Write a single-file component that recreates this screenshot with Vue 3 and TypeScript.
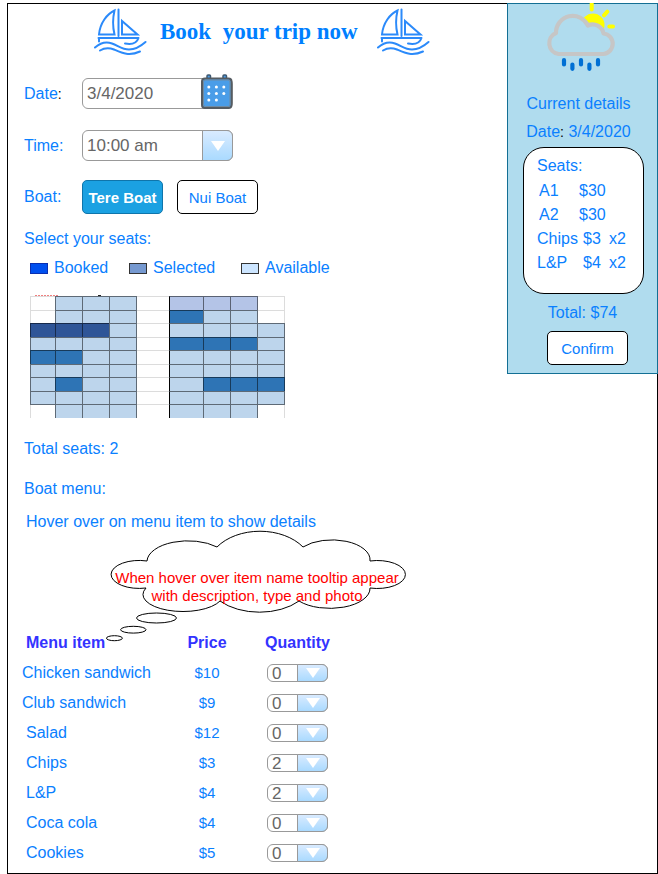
<script setup lang="ts">
import { computed, ref } from 'vue'

interface MenuItem {
  name: string
  price: number
  quantity: number
  sandwich?: boolean
}

const date = ref('3/4/2020')
const time = ref('10:00 am')
const boat = ref('Tere Boat')
const boats = ['Tere Boat', 'Nui Boat']
const times = ['10:00 am', '12:00 pm', '2:00 pm']
const quantities = [0, 1, 2, 3, 4]

const legend = [
  { label: 'Booked', kind: 'booked' },
  { label: 'Selected', kind: 'selected' },
  { label: 'Available', kind: 'available' },
]

// a: available, s: selected, b: booked, l: reserved, dot: no seat
const seatPlan = [
  '.aaa.lll.',
  '.aaa.saa.',
  'bbba.aaaa',
  'aaaa.sssa',
  'ssaa.aaaa',
  'aaaa.aaaa',
  'asaa.asss',
  'aaaa.aaaa',
  '.aaa.aaa.',
]
const seats = seatPlan.flatMap((row, r) =>
  [...row].map((kind, c) => ({ kind, id: `${r}-${c}`, divider: c === 5, name: `Row ${r + 1} seat ${c + 1}` })),
)

const pickedSeats = [
  { id: 'A1', price: 30 },
  { id: 'A2', price: 30 },
]

const menu = ref<MenuItem[]>([
  { name: 'Chicken sandwich', price: 10, quantity: 0, sandwich: true },
  { name: 'Club sandwich', price: 9, quantity: 0, sandwich: true },
  { name: 'Salad', price: 12, quantity: 0 },
  { name: 'Chips', price: 3, quantity: 2 },
  { name: 'L&P', price: 4, quantity: 2 },
  { name: 'Coca cola', price: 4, quantity: 0 },
  { name: 'Cookies', price: 5, quantity: 0 },
])

const ordered = computed(() => menu.value.filter((m) => m.quantity > 0))
const total = computed(
  () =>
    pickedSeats.reduce((sum, s) => sum + s.price, 0) +
    ordered.value.reduce((sum, m) => sum + m.price * m.quantity, 0),
)
</script>

<template>
  <div class="page">
    <div class="frame">
      <main class="main">
        <header class="header">
          <svg class="sailboat" viewBox="0 0 53 49" aria-hidden="true">
            <g id="sailboat">
              <path d="M20.5 3.5C13 7 6 16 5 27.5H20.5C18.5 19 18.5 12 20.5 3.5ZM24.5 2.5V29M28 14V27.5H43.5Z" />
              <path d="M4.5 31H44.5M5 31V34.5M44.5 31C43 35.5 39 38 31 36.5" />
              <path d="M1 40.5C5 37 11 34 18 36.5C24 38.5 28 42.5 35 42.5C42 42.5 47 39 51.5 35" />
              <path d="M6 43.5C10 41 15 40.5 20 42.5C28 46 35 49.5 46 44.5" />
            </g>
          </svg>
          <h1 class="title">Book&nbsp; your trip now</h1>
          <svg class="sailboat" viewBox="0 0 53 49" aria-hidden="true"><use href="#sailboat" /></svg>
        </header>

        <form class="form" @submit.prevent>
          <div class="row">
            <label for="date">Date<span class="colon">:</span></label>
            <div class="field">
              <input id="date" v-model="date" type="text" />
              <button type="button" class="calendar" aria-label="Open calendar">
                <svg viewBox="0 0 33 36" width="33" height="36">
                  <g fill="#4a9de8" stroke="#3f5870" stroke-width="1.5">
                    <rect x="7" y="2" width="3.5" height="6" rx="1" />
                    <rect x="23" y="2" width="3.5" height="6" rx="1" />
                  </g>
                  <rect x="2" y="5.5" width="29.5" height="29.5" rx="3" fill="#4a9de8" stroke="#555c62" stroke-width="2" />
                  <rect x="3.5" y="7" width="26.5" height="26.5" rx="2" fill="none" stroke="#6f8ba3" />
                  <g fill="#fff">
                    <circle cx="8.8" cy="14" r="1.5" /><circle cx="16.4" cy="14" r="1.5" /><circle cx="23.8" cy="14" r="1.5" />
                    <circle cx="8.8" cy="20.5" r="1.5" /><circle cx="16.4" cy="20.5" r="1.5" /><circle cx="23.8" cy="20.5" r="1.5" />
                    <circle cx="8.8" cy="27" r="1.5" /><circle cx="16.4" cy="27" r="1.5" />
                  </g>
                </svg>
              </button>
            </div>
          </div>
          <div class="row">
            <label for="time">Time:</label>
            <div class="field">
              <select id="time" v-model="time">
                <option v-for="t in times" :key="t">{{ t }}</option>
              </select>
              <span class="arrow"><svg viewBox="0 0 14 10" width="14" height="10"><path d="M0 0H14L7 10Z" /></svg></span>
            </div>
          </div>
          <div class="row boats">
            <span class="label">Boat:</span>
            <div class="choices">
              <button
                v-for="b in boats"
                :key="b"
                type="button"
                class="button"
                :class="{ active: b === boat }"
                @click="boat = b"
              >{{ b }}</button>
            </div>
          </div>
        </form>

        <p class="seats-heading">Select your seats:</p>
        <ul class="legend">
          <li v-for="l in legend" :key="l.kind"><i class="swatch" :class="l.kind"></i>{{ l.label }}</li>
        </ul>

        <div class="map">
          <svg class="map-edge" viewBox="0 0 254 1" width="254" height="1" aria-hidden="true">
            <path d="M5 .5H28" stroke="#f08080" stroke-dasharray="2 1" />
            <path d="M68 .5H71" stroke="#222" />
          </svg>
          <div class="seat-grid">
            <template v-for="s in seats" :key="s.id">
              <span v-if="s.kind === '.'" class="gap"></span>
              <button v-else type="button" class="seat" :class="[s.kind, { divider: s.divider }]" :aria-label="s.name"></button>
            </template>
          </div>
        </div>

        <p class="total-seats">Total seats: {{ pickedSeats.length }}</p>
        <h2 class="menu-heading">Boat menu:</h2>

        <section class="menu">
          <p class="hint">Hover over on menu item to show details</p>
          <div class="bubble" role="tooltip">
            <svg viewBox="0 0 302 112" width="302" height="112" aria-hidden="true">
              <path
                d="M41 31A41 21 0 0 1 111 17A52 36 0 0 1 197 17A38 20 0 0 1 264 31A28 14 0 1 1 264 58A40 20 0 0 1 193 71A52 32 0 0 1 114 71A40 17 0 0 1 40 58A28 14 0 1 1 41 31Z"
              />
              <ellipse cx="50.5" cy="88" rx="20" ry="5" />
              <ellipse cx="27.3" cy="99.7" rx="12.7" ry="3.4" />
              <ellipse cx="8.4" cy="108.2" rx="8" ry="2.5" />
            </svg>
            <p>When hover over item name tooltip appear with description, type and photo</p>
          </div>
          <table>
            <thead>
              <tr>
                <th class="name">Menu item</th>
                <th class="price">Price</th>
                <th class="quantity">Quantity</th>
              </tr>
            </thead>
            <tbody>
              <tr v-for="m in menu" :key="m.name">
                <td class="name" :class="{ sandwich: m.sandwich }">{{ m.name }}</td>
                <td class="price">${{ m.price }}</td>
                <td class="quantity">
                  <div class="field small">
                    <select v-model="m.quantity" :aria-label="`Quantity of ${m.name}`">
                      <option v-for="q in quantities" :key="q" :value="q">{{ q }}</option>
                    </select>
                    <span class="arrow"><svg viewBox="0 0 14 10" width="14" height="10"><path d="M0 0H14L7 10Z" /></svg></span>
                  </div>
                </td>
              </tr>
            </tbody>
          </table>
        </section>
      </main>

      <aside class="summary">
        <svg class="weather" viewBox="0 0 70 70" width="70" height="70" aria-hidden="true">
          <g stroke="#ffff00" stroke-width="4" stroke-linecap="round">
            <path d="M45.7 0V6.5M58 12.3L61.3 8.7M63.3 23.4H67" />
          </g>
          <circle cx="47" cy="22" r="11.5" fill="#ffff00" />
          <path
            d="M12.5 51A11 11 0 0 1 10 30A16.800 16.800 0 0 1 42 22.500A11 11 0 0 1 57.500 30.500A10.300 10.300 0 0 1 57.300 51Z"
            fill="#b0dcee"
            stroke="#c6c6c6"
            stroke-width="4.2"
            stroke-linejoin="round"
          />
          <path
            d="M18 57.2V61.5M26.4 61.5V65.8M35 57.2V61.5M43.4 61.5V65.8M52 57.2V61.5"
            stroke="#0070d4"
            stroke-width="4.2"
            stroke-linecap="round"
          />
        </svg>
        <h2>Current details</h2>
        <p class="summary-date">Date<span class="colon">:</span> {{ date }}</p>
        <div class="card">
          <h3>Seats:</h3>
          <ul class="lines seat-lines">
            <li v-for="s in pickedSeats" :key="s.id"><span>{{ s.id }}</span><span>${{ s.price }}</span></li>
          </ul>
          <ul class="lines item-lines">
            <li v-for="m in ordered" :key="m.name">
              <span>{{ m.name }}</span><span>${{ m.price }}</span><span>x{{ m.quantity }}</span>
            </li>
          </ul>
        </div>
        <p class="sum">Total: ${{ total }}</p>
        <button type="button" class="button">Confirm</button>
      </aside>
    </div>
  </div>
</template>

<style>
body {
  background: #fff;
}
</style>

<style scoped>
* {
  box-sizing: border-box;
}
.page {
  padding: 3px 0 0 7px;
  font: 16px/20px 'Liberation Sans', Arial, sans-serif;
  color: #0a80ff;
}
h1, h2, h3, p, ul {
  margin: 0;
  padding: 0;
  font-size: inherit;
  font-weight: normal;
  list-style: none;
}
button, select, input {
  font-family: inherit;
  margin: 0;
}
.frame {
  display: flex;
  align-items: flex-start;
  min-height: calc(100vh - 3px);
  border: 1px solid #000;
}
.main {
  flex: 1;
  min-width: 0;
  padding-left: 16px;
}
.header {
  display: flex;
  align-items: center;
  gap: 13px;
  height: 54px;
  margin-bottom: 20px;
  padding-left: 70px;
}
.sailboat {
  flex: none;
  width: 53px;
  height: 49px;
  fill: none;
  stroke: #2b8afa;
  stroke-width: 2;
  stroke-linecap: round;
}
.title {
  min-width: 204px;
  padding-top: 2px;
  font: bold 23px/28px 'Liberation Serif', 'Times New Roman', serif;
  color: #007fff;
  white-space: nowrap;
}
.row {
  display: grid;
  grid-template-columns: 58px auto;
  justify-content: start;
  align-items: center;
}
.row + .row {
  margin-top: 21px;
}
.row + .row.boats {
  margin-top: 19px;
}
.colon {
  color: #000;
  font-size: 14px;
}
.field {
  display: grid;
  grid-template: 31px / 151px;
}
.field > * {
  grid-area: 1 / 1;
}
.field input,
.field select {
  width: 100%;
  height: 100%;
  padding: 0 4px;
  border: 1px solid #999;
  border-radius: 6px;
  background: #fff;
  color: #666;
  font-size: 17px;
  line-height: 17px;
  appearance: none;
}
.calendar {
  justify-self: end;
  align-self: end;
  padding: 0;
  border: 0;
  background: none;
}
.calendar svg {
  display: block;
}
.arrow {
  display: flex;
  align-items: center;
  justify-content: center;
  justify-self: end;
  width: 31px;
  border: 1px solid #999;
  border-radius: 0 6px 6px 0;
  background: linear-gradient(#d9ebff, #aadaff);
  pointer-events: none;
}
.arrow path {
  fill: #fff;
}
.field.small {
  display: inline-grid;
  grid-template: 18px / 61px;
  vertical-align: middle;
}
.choices {
  display: flex;
  gap: 14px;
}
.button {
  width: 81px;
  height: 34px;
  padding: 1px 0 0;
  border: 1px solid #000;
  border-radius: 5px;
  background: #fff;
  color: #0a80ff;
  font-size: 15px;
  white-space: nowrap;
}
.button.active {
  border-color: #0f75ab;
  background: #1ba1e2;
  color: #fff;
  font-weight: bold;
}
.seats-heading {
  margin-top: 15px;
}
.legend {
  display: grid;
  grid-template-columns: 99px 112px auto;
  justify-content: start;
  margin: 9px 0 0 6px;
}
.legend li {
  display: flex;
  align-items: center;
  gap: 6px;
}
.swatch {
  width: 18px;
  height: 11px;
  border: 1px solid #333;
}
.swatch.booked {
  border-color: #0a2fb0;
  background: #0050ef;
}
.swatch.selected {
  background: #7699d0;
}
.swatch.available {
  background: #cce5ff;
}
.map {
  margin: 17px 0 0 6px;
}
.map-edge {
  display: block;
}
.seat-grid {
  display: grid;
  grid-template-columns: 25px 27px 27px 27px 33px 34px 27px 27px 27px;
  grid-template-rows: 14px 13px 14px 13px 14px 13px 14px 13px 14px;
  width: 255px;
  height: 122px;
  overflow: hidden;
}
.gap,
.seat {
  margin: 0 -1px -1px 0;
  padding: 0;
  border: 1px solid #dcdcdc;
}
.seat {
  position: relative;
  border-color: rgba(0, 0, 0, 0.5);
  border-radius: 0;
}
.seat.a {
  background: #bdd5ec;
}
.seat.s {
  background: #2e74b5;
}
.seat.b {
  background: #2f5597;
}
.seat.l {
  background: #b4c4e7;
}
.seat.divider {
  border-left-color: #000;
}
.total-seats {
  margin-top: 21px;
}
.menu-heading {
  margin-top: 20px;
}
.menu {
  position: relative;
  margin-top: 13px;
}
.hint {
  padding-left: 2px;
}
.bubble {
  position: absolute;
  top: 18px;
  left: 82px;
  width: 302px;
}
.bubble svg {
  display: block;
  fill: #fff;
  stroke: #000;
}
.bubble p {
  position: absolute;
  top: 39px;
  left: 4px;
  width: 294px;
  color: #f00;
  font-size: 15px;
  line-height: 18px;
  text-align: center;
}
table {
  margin: 96px 0 0 -2px;
  border-collapse: collapse;
}
tr {
  height: 30px;
}
th,
td {
  padding: 0;
}
th {
  color: #3333ff;
}
.name {
  width: 155px;
  padding-left: 4px;
  text-align: left;
}
.name.sandwich {
  padding-left: 0;
}
.price {
  width: 60px;
  text-align: center;
}
td.price {
  font-size: 15px;
}
.quantity {
  width: 121px;
  text-align: center;
}
td.quantity {
  line-height: 18px;
}
.summary {
  display: flex;
  flex-direction: column;
  align-items: center;
  width: 151px;
  margin: -1px -1px 0 0;
  padding-bottom: 8px;
  border: 1px solid #136f94;
  background: #b0dcee;
}
.weather {
  margin: -1px 3px 0 0;
}
.summary h2 {
  margin: 21px 8px 0 0;
}
.summary-date {
  margin: 8px 8px 0 0;
}
.card {
  width: 121px;
  height: 147px;
  margin: 5px 0 0 2px;
  padding: 8px 0 0 13px;
  border: 1px solid #000;
  border-radius: 21px;
  background: #fff;
}
.lines li {
  display: grid;
  line-height: 24px;
}
.seat-lines {
  padding-top: 3px;
}
.seat-lines li {
  grid-template-columns: 40px auto;
  padding-left: 2px;
}
.item-lines li {
  grid-template-columns: 46px 26px auto;
}
.sum {
  margin-top: 9px;
}
.summary .button {
  margin: 8px 0 0 10px;
}
</style>
